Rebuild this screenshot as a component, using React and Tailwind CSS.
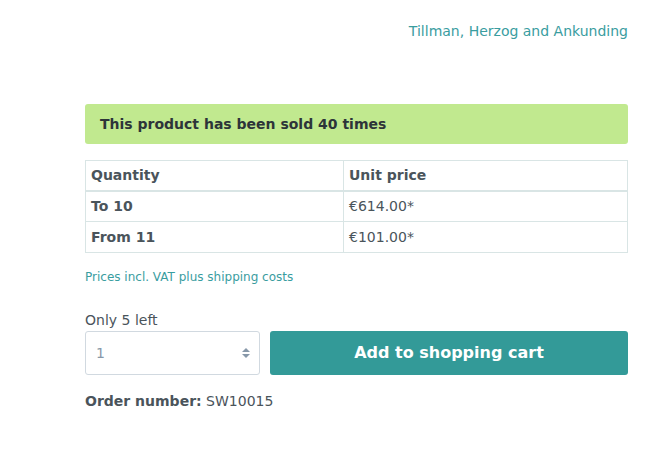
import React, { useState } from 'react';

const font = { fontFamily: '"DejaVu Sans", Verdana, sans-serif' };

const prices = [
  { qty: 'To 10', price: '€614.00*' },
  { qty: 'From 11', price: '€101.00*' },
];

export default function App() {
  const [qty, setQty] = useState('1');

  return (
    <div className="w-[670px] h-[462px] bg-white text-[#4a545b]" style={font}>
      <div className="ml-[85px] w-[543px] pt-[21px]">
        {/* Manufacturer */}
        <div className="flex justify-end h-[20px]">
          <a href="#" className="text-[14px] leading-[20px] text-[#3a9d9f]">
            Tillman, Herzog and Ankunding
          </a>
        </div>

        {/* Sold notice */}
        <div className="mt-[63px] h-[40px] rounded-[3px] bg-[#c1e98f] px-[15px] flex items-center">
          <span className="text-[14px] font-bold text-[#2d3439]">This product has been sold 40 times</span>
        </div>

        {/* Price table */}
        <table className="mt-[16px] w-full border-collapse text-[14px]">
          <thead>
            <tr className="h-[30px]">
              <th className="w-[258px] border border-[#d9e5e5] border-b-2 px-[5px] text-left font-bold">Quantity</th>
              <th className="border border-[#d9e5e5] border-b-2 px-[5px] text-left font-bold">Unit price</th>
            </tr>
          </thead>
          <tbody>
            {prices.map((p) => (
              <tr key={p.qty} className="h-[31px]">
                <td className="border border-[#d9e5e5] px-[5px] font-bold">{p.qty}</td>
                <td className="border border-[#d9e5e5] px-[5px]">{p.price}</td>
              </tr>
            ))}
          </tbody>
        </table>

        <p className="mt-[15px] text-[12px] leading-[18px] text-[#3a9d9f]">Prices incl. VAT plus shipping costs</p>

        {/* Buy */}
        <div className="mt-[25px] text-[14px] leading-[18px]">Only 5 left</div>
        <div className="mt-[2px] flex gap-[10px]">
          <div className="relative w-[175px] h-[44px]">
            <select
              value={qty}
              onChange={(e) => setQty(e.target.value)}
              className="appearance-none w-full h-full rounded-[3px] border border-[#d1d9e0] bg-white pl-[10px] text-[14px] text-[#8798a9] outline-none"
              style={font}
            >
              {[1, 2, 3, 4, 5].map((n) => (
                <option key={n} value={n}>{n}</option>
              ))}
            </select>
            <svg className="pointer-events-none absolute right-[9px] top-[16px]" width="10" height="12" viewBox="0 0 10 12">
              <path d="M5 1 L9 5 H1 Z" fill="#8798a9" />
              <path d="M5 11 L9 7 H1 Z" fill="#8798a9" />
            </svg>
          </div>
          <button className="flex-1 h-[44px] rounded-[3px] bg-[#339a98] text-white text-[16px] font-bold" style={font}>
            Add to shopping cart
          </button>
        </div>

        <div className="mt-[17px] text-[14px] leading-[18px]">
          <span className="font-bold">Order number:</span> SW10015
        </div>
      </div>
    </div>
  );
}
